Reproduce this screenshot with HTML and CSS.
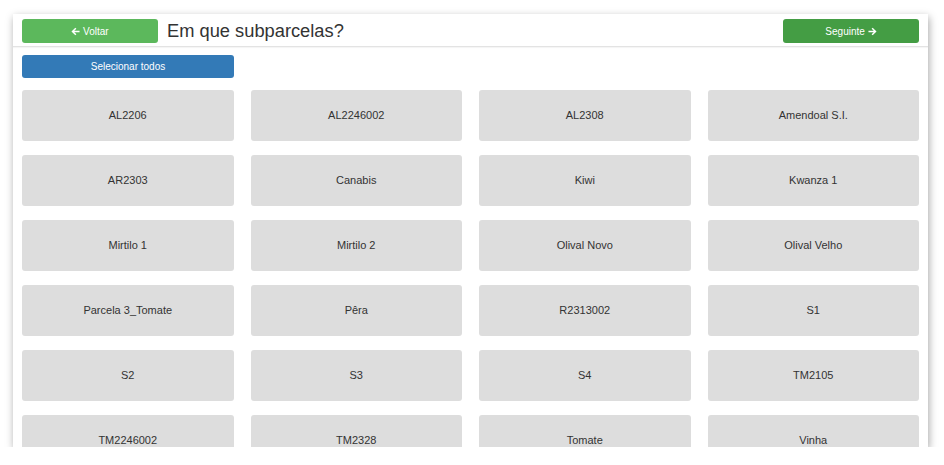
FILE: index.html
```html
<!DOCTYPE html>
<html lang="pt">
  <head>
    <meta charset="UTF-8" />
    <meta name="viewport" content="width=device-width, initial-scale=1.0" />
    <title>Em que subparcelas?</title>
    <link rel="stylesheet" href="styles.css">
  </head>
  <body>
    <div class="panel">
      <!-- Top bar -->
      <div class="topbar">
        <button class="btn btn-back">
          <svg class="arrow" viewBox="0 0 10 10" width="9" height="9">
            <path d="M0.5 5 L4.8 0.8 L6 2 L3.6 4.1 L9.5 4.1 L9.5 5.9 L3.6 5.9 L6 8 L4.8 9.2 Z" fill="#fff" />
          </svg>
          Voltar
        </button>
        <h1>Em que subparcelas?</h1>
        <button class="btn btn-next">
          Seguinte
          <svg class="arrow" viewBox="0 0 10 10" width="9" height="9">
            <path d="M9.5 5 L5.2 0.8 L4 2 L6.4 4.1 L0.5 4.1 L0.5 5.9 L6.4 5.9 L4 8 L5.2 9.2 Z" fill="#fff" />
          </svg>
        </button>
      </div>

      <div class="content">
        <button class="btn btn-select">Selecionar todos</button>

        <div class="plots" id="plots">
          <!-- Tiles are added here -->
        </div>
      </div>
    </div>

    <script>
      const plots = [
        "AL2206", "AL2246002", "AL2308", "Amendoal S.I.",
        "AR2303", "Canabis", "Kiwi", "Kwanza 1",
        "Mirtilo 1", "Mirtilo 2", "Olival Novo", "Olival Velho",
        "Parcela 3_Tomate", "Pêra", "R2313002", "S1",
        "S2", "S3", "S4", "TM2105",
        "TM2246002", "TM2328", "Tomate", "Vinha"
      ];

      const grid = document.getElementById("plots");
      plots.forEach((name) => {
        const tile = document.createElement("div");
        tile.className = "plot";
        tile.textContent = name;
        grid.appendChild(tile);
      });
    </script>
  </body>
</html>
```

FILE: styles.css
```css
body {
  margin: 0;
  background: #fff;
  font-family: "Liberation Sans", Arial, sans-serif;
  color: #333;
}

.panel {
  margin: 14px 0 0 13px;
  width: 915px;
  height: 433px;
  background: #fff;
  box-shadow: 1px 3px 8px rgba(0, 0, 0, 0.35);
  overflow: hidden;
}

.topbar {
  display: flex;
  align-items: center;
  padding: 5px 9px 3px 9px;
  border-bottom: 1px solid #e3e3e3;
  box-shadow: 0 1px 1px rgba(0, 0, 0, 0.04);
}

.topbar h1 {
  flex: 1;
  margin: 0 0 0 9px;
  font-size: 18.3px;
  font-weight: normal;
  color: #333;
}

.btn {
  border: none;
  border-radius: 3px;
  color: #fff;
  font-family: inherit;
  font-size: 10px;
  cursor: pointer;
  padding: 0;
}

.btn .arrow {
  vertical-align: -1px;
}

.btn-back {
  width: 136px;
  height: 24px;
  background: #5cb85c;
}

.btn-next {
  width: 136px;
  height: 24px;
  background: #449d44;
}

.content {
  padding: 8px 9px 0 9px;
}

.btn-select {
  width: 212px;
  height: 23px;
  background: #337ab7;
  display: block;
  margin-bottom: 12px;
}

.plots {
  display: grid;
  grid-template-columns: repeat(4, 1fr);
  column-gap: 17px;
  row-gap: 14px;
}

.plot {
  box-sizing: border-box;
  height: 51px;
  padding-bottom: 2px;
  display: flex;
  align-items: center;
  justify-content: center;
  background: #ddd;
  border-radius: 3px;
  font-size: 11px;
  color: #333;
}
```
